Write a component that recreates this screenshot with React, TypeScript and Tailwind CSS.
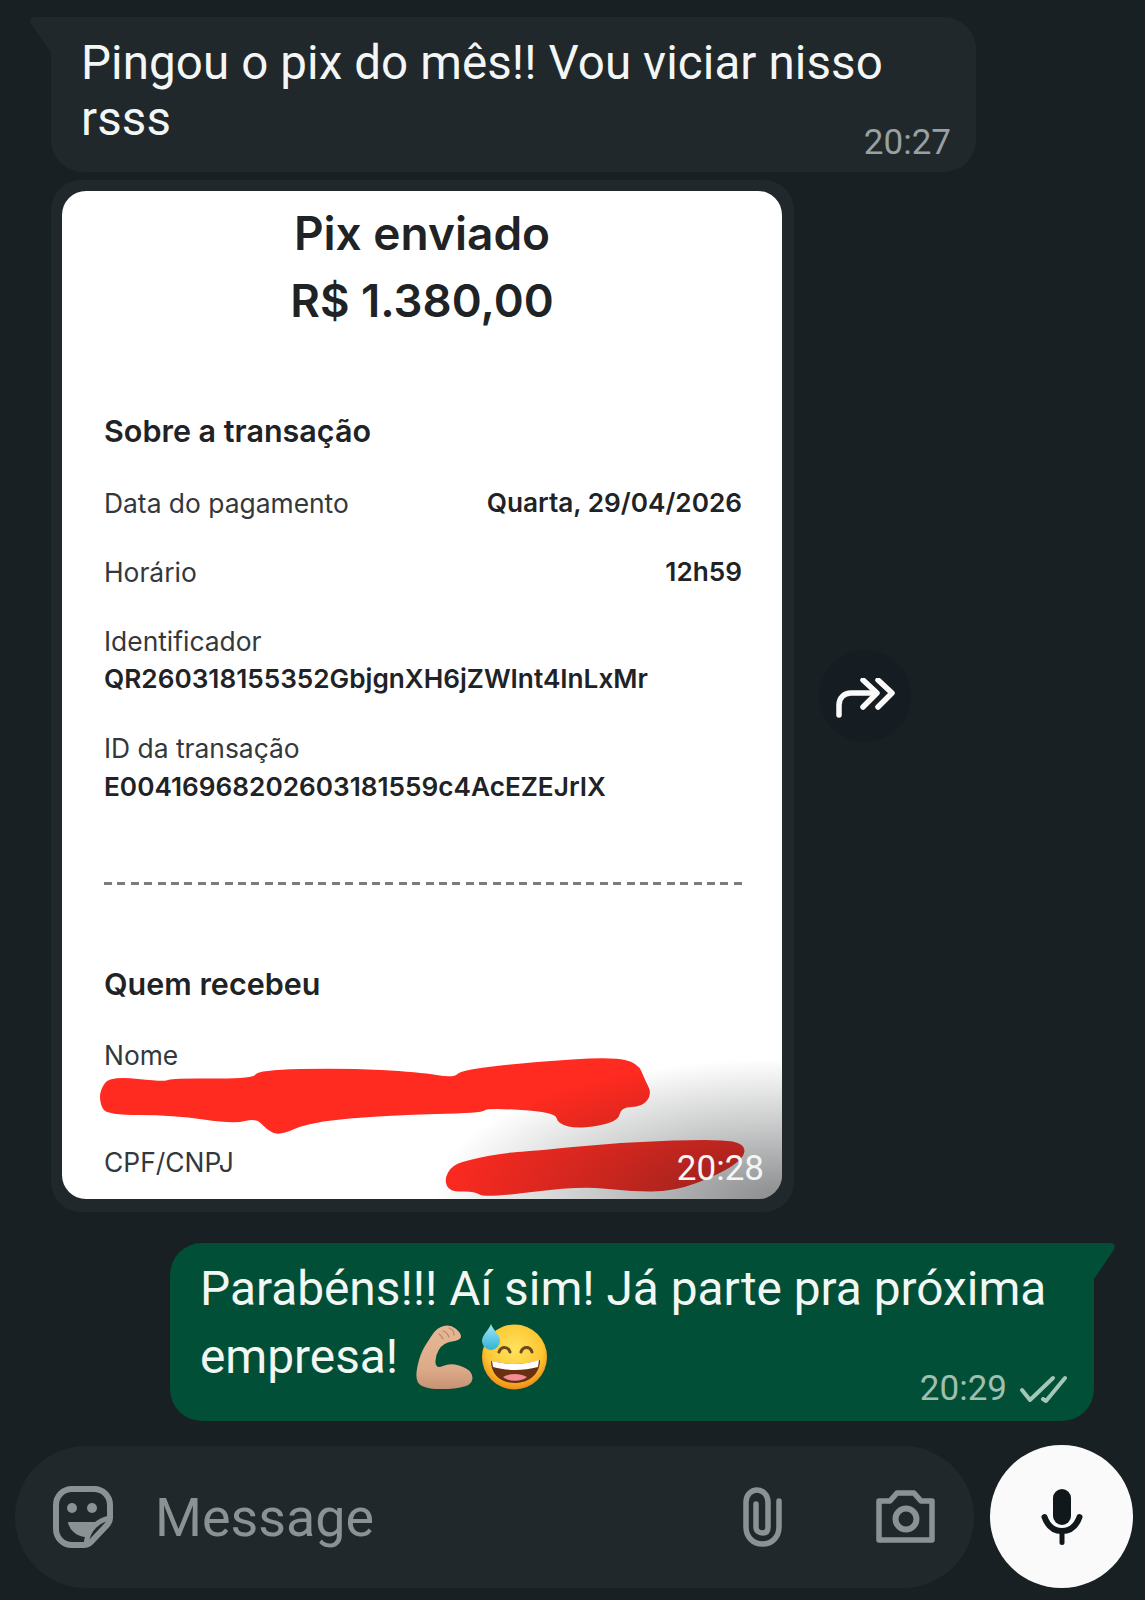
import React from "react";

const smooth = (p: number[][]) => {
  const n = p.length;
  const mid = (a: number[], b: number[]) => [(a[0] + b[0]) / 2, (a[1] + b[1]) / 2];
  const s = mid(p[n - 1], p[0]);
  let d = `M${s[0]} ${s[1]}`;
  for (let i = 0; i < n; i++) {
    const m = mid(p[i], p[(i + 1) % n]);
    d += ` Q${p[i][0]} ${p[i][1]} ${m[0]} ${m[1]}`;
  }
  return d + " Z";
};

const nameScribble = [
  [100, 1090], [110, 1076], [166, 1082], [170, 1078], [253, 1079], [258, 1070], [343, 1068], [419, 1072], [454, 1078], [461, 1070],
  [532, 1062], [612, 1057], [638, 1063], [645, 1080], [652, 1094], [642, 1107], [621, 1107], [618, 1122], [579, 1129], [558, 1124],
  [555, 1112], [487, 1108], [482, 1113], [390, 1115], [310, 1122], [279, 1136], [266, 1129], [256, 1118], [234, 1124], [173, 1115],
  [107, 1115], [100, 1104],
];
const cpfScribble = [
  [444, 1180], [452, 1165], [473, 1159], [503, 1153], [532, 1151], [626, 1142], [720, 1139], [745, 1144], [744, 1158], [720, 1174],
  [673, 1192], [626, 1191], [579, 1186], [485, 1198], [474, 1191], [450, 1192],
];
const armShape = [
  [34, -1], [45, 8], [45, 15], [27, 18], [19, 31], [20, 44], [34, 38], [52, 43], [58, 53], [52, 62], [24, 65], [5, 62], [-1, 53], [4, 29], [14, 13], [21, 3],
];

const Label = ({ className = "", children }: { className?: string; children: React.ReactNode }) => (
  <div className={`text-[26.4px] leading-[34px] font-normal text-[#33383c] ${className}`}>{children}</div>
);
const Strong = ({ className = "", children }: { className?: string; children: React.ReactNode }) => (
  <div className={`text-[26.2px] leading-[34px] font-semibold text-[#1f2326] ${className}`}>{children}</div>
);

function Muscle() {
  return (
    <svg viewBox="0 0 57 64" className="w-[57px] h-[64px] shrink-0">
      <defs>
        <linearGradient id="arm" x1="0.5" y1="0" x2="0.5" y2="1">
          <stop offset="0" stopColor="#e6b897" />
          <stop offset="0.7" stopColor="#dcaa88" />
          <stop offset="1" stopColor="#c59274" />
        </linearGradient>
      </defs>
      <path d={smooth(armShape)} fill="url(#arm)" />
      <path d="M27 6c3 1 5 3 6 6M33 3c3 1 5 4 5 7M23 9c2 1 3 3 4 5" stroke="#b8886b" strokeWidth="1.3" fill="none" strokeLinecap="round" />
    </svg>
  );
}

function SweatSmile() {
  return (
    <svg viewBox="0 0 65 66" className="w-[65px] h-[66px] shrink-0">
      <defs>
        <radialGradient id="face" cx="50%" cy="38%" r="62%">
          <stop offset="0" stopColor="#ffe35e" />
          <stop offset="0.7" stopColor="#fcc631" />
          <stop offset="1" stopColor="#ee8a16" />
        </radialGradient>
        <linearGradient id="drop" x1="0" y1="0" x2="0" y2="1">
          <stop offset="0" stopColor="#a4e6f4" />
          <stop offset="1" stopColor="#2fb3d6" />
        </linearGradient>
      </defs>
      <circle cx="32.5" cy="33" r="32.5" fill="url(#face)" />
      <path d="M17 28c2-6 9-6 11 0M39 28c2-6 9-6 11 0" stroke="#6b4a1d" strokeWidth="3" fill="none" strokeLinecap="round" />
      <path d="M9 37c16 4 33 4 49-1 0 14-11 23-25 23S9 51 9 37z" fill="#6a2f10" />
      <path d="M10 37c15 4 32 4 47-1l-1 7c-15 4-31 4-45 0z" fill="#fff" />
      <path d="M21 53c6-4 17-4 24 0-6 5-18 5-24 0z" fill="#f28b94" />
      <path d="M9 0C11 6 18 11 18 17A9 9 0 0 1 0 17C0 11 7 6 9 0Z" fill="url(#drop)" />
    </svg>
  );
}

export default function App() {
  return (
    <div className="w-[1145px] h-[1600px] overflow-hidden bg-[#182024] flex flex-col font-['Roboto',sans-serif]">
      {/* first incoming bubble */}
      <div className="relative mt-[17px] ml-[51px] w-[925px] h-[155px] bg-[#20282b] rounded-tr-[32px] rounded-b-[32px] pl-[30px] pt-[18px] text-[47.5px] leading-[56px] text-[#f4f6f6] tracking-[0.1px]">
        <svg viewBox="0 0 30 40" className="absolute left-[-22px] top-0 w-[30px] h-[40px]">
          <path d="M30 0H6C1 0 0 4 3 8l19 28 8 4z" fill="#20282b" />
        </svg>
        <div>Pingou o pix do mês!! Vou viciar nisso</div>
        <div>rsss</div>
        <span className="absolute right-[25px] bottom-[9px] text-[35px] leading-[40px] tracking-normal text-[#98a0a2]">20:27</span>
      </div>

      {/* image bubble + forward */}
      <div className="mt-[8px] ml-[51px] flex items-center">
        <div className="w-[743px] h-[1032px] bg-[#20282b] rounded-[30px] p-[11px]">
          <div className="relative w-[720px] h-[1008px] bg-white rounded-[24px] overflow-hidden pl-[42px] pr-[40px] pt-[9px] font-['Inter',sans-serif]">
            <div className="text-center pr-[2px] text-[46px] leading-[66px] font-semibold text-[#1f2326]">Pix enviado</div>
            <div className="mt-[2px] text-center pr-[2px] text-[45.5px] leading-[66px] font-semibold text-[#1f2326]">R$ 1.380,00</div>
            <Strong className="mt-[80px] !text-[30.5px]">Sobre a transação</Strong>
            <div className="mt-[38px] flex justify-between">
              <Label>Data do pagamento</Label>
              <Strong>Quarta, 29/04/2026</Strong>
            </div>
            <div className="mt-[35px] flex justify-between">
              <Label>Horário</Label>
              <Strong>12h59</Strong>
            </div>
            <Label className="mt-[35px]">Identificador</Label>
            <Strong className="mt-[4px]">QR260318155352GbjgnXH6jZWInt4InLxMr</Strong>
            <Label className="mt-[35px]">ID da transação</Label>
            <Strong className="mt-[5px]">E00416968202603181559c4AcEZEJrIX</Strong>
            <div className="mt-[78px] h-[3px] bg-[repeating-linear-gradient(90deg,#7a7d80_0,#7a7d80_8px,transparent_8px,transparent_13.4px)]" />
            <Strong className="mt-[82px] !text-[30.5px]">Quem recebeu</Strong>
            <Label className="mt-[37px]">Nome</Label>
            <Label className="mt-[73px]">CPF/CNPJ</Label>
            <svg viewBox="62 191 720 1008" className="absolute inset-0 w-[720px] h-[1008px]">
              <path fill="#ff2a20" d={smooth(nameScribble)} />
              <path fill="#ff2a20" d={smooth(cpfScribble)} />
            </svg>
            <div className="absolute inset-0 bg-[radial-gradient(ellipse_350px_140px_at_100%_100%,rgba(20,24,26,0.5),rgba(20,24,26,0.22)_55%,rgba(20,24,26,0)_100%)]" />
            <span className="absolute right-[18px] bottom-[10px] text-[35px] leading-[40px] text-[#f4f6f6] font-['Roboto',sans-serif]">20:28</span>
          </div>
        </div>
        <div className="ml-[25px] w-[92px] h-[92px] rounded-full bg-[#151d23] flex items-center justify-center">
          <svg viewBox="0 0 59 40" className="w-[59px] h-[40px] mt-[3px]" fill="none" stroke="#fafafa" strokeWidth="5.5" strokeLinecap="round" strokeLinejoin="round">
            <path d="M3 37V27C3 20 8 15 15 15H40" />
            <path d="M27 2L41 15 27 29" />
            <path d="M42 2L56 15 42 29" />
          </svg>
        </div>
      </div>

      {/* outgoing bubble */}
      <div className="relative mt-[31px] ml-[170px] w-[924px] h-[178px] bg-[#024f37] rounded-tl-[32px] rounded-b-[32px] pl-[30px] pt-[12px] text-[47.8px] text-[#f2f7f4]">
        <svg viewBox="0 0 30 40" className="absolute right-[-22px] top-0 w-[30px] h-[40px]">
          <path d="M0 0H24C29 0 30 4 27 8L8 36 0 40z" fill="#024f37" />
        </svg>
        <div className="leading-[68px]">Parabéns!!! Aí sim! Já parte pra próxima</div>
        <div className="leading-[68px] flex items-center h-[68px]">
          <span>empresa!</span>
          <span className="ml-[18px] flex items-center">
            <Muscle />
            <span className="ml-[9px]"><SweatSmile /></span>
          </span>
        </div>
        <div className="absolute right-[27px] bottom-[12px] flex items-center gap-[12px]">
          <span className="text-[35px] leading-[40px] text-[#9fbfb1]">20:29</span>
          <svg viewBox="0 0 48 29" className="w-[48px] h-[29px]" fill="none" stroke="#a4c8b8" strokeWidth="4" strokeLinecap="round" strokeLinejoin="round">
            <path d="M3 15L11 25 34 3" />
            <path d="M24 24L27 26 46 3" />
          </svg>
        </div>
      </div>

      {/* input */}
      <div className="mt-[24px] ml-[15px] flex items-center">
        <div className="w-[959px] h-[142px] rounded-[71px] bg-[#20282b] flex items-center pl-[38px] pr-[39px]">
          <svg viewBox="0 0 60 62" className="w-[60px] h-[62px] shrink-0" fill="none" stroke="#8a9294" strokeWidth="6" strokeLinejoin="round" strokeLinecap="round">
            <path d="M19 3H41C50 3 57 10 57 19V32C57 35 56 37 54 39L38 56C36 58 34 59 31 59H19C10 59 3 52 3 43V19C3 10 10 3 19 3Z" />
            <circle cx="19" cy="22" r="5" fill="#8a9294" stroke="none" />
            <circle cx="39" cy="22" r="5" fill="#8a9294" stroke="none" />
            <path d="M16 37H42C40 42 36 46 32 50C24 49 18 44 16 37Z" fill="#8a9294" strokeWidth="2" />
            <path d="M57 32C46 34 35 42 33 58" strokeWidth="5" />
          </svg>
          <span className="ml-[42px] mt-[3px] text-[53.8px] leading-[60px] text-[#8a9294]">Message</span>
          <svg viewBox="0 0 39 60" className="ml-auto w-[39px] h-[60px] shrink-0" fill="none" stroke="#8a9294" strokeWidth="5.5" strokeLinecap="round">
            <path d="M36 14V40C36 50 29 57 19.5 57S3 50 3 40V15C3 8 8 3 14 3S25 8 25 15V40C25 44 23 46 19.5 46S13 44 13 40V17" />
          </svg>
          <svg viewBox="0 0 59 53" className="ml-[94px] w-[59px] h-[53px] shrink-0" fill="none" stroke="#8a9294" strokeWidth="5.5" strokeLinejoin="round">
            <path d="M3 11H14L21 3H38L45 11H56V50H3Z" />
            <circle cx="30" cy="29" r="10.5" strokeWidth="6" />
          </svg>
        </div>
        <div className="ml-[16px] w-[143px] h-[143px] rounded-full bg-[#fafafa] flex items-center justify-center">
          <svg viewBox="0 0 42 56" className="w-[42px] h-[56px]" fill="#10181c">
            <rect x="12" y="0" width="18" height="36" rx="9" />
            <path d="M3.5 28C7 38 14 42 21 42S35 38 38.5 28" fill="none" stroke="#10181c" strokeWidth="6" strokeLinecap="round" />
            <rect x="18.5" y="42" width="5" height="14" rx="2.5" />
          </svg>
        </div>
      </div>
    </div>
  );
}
